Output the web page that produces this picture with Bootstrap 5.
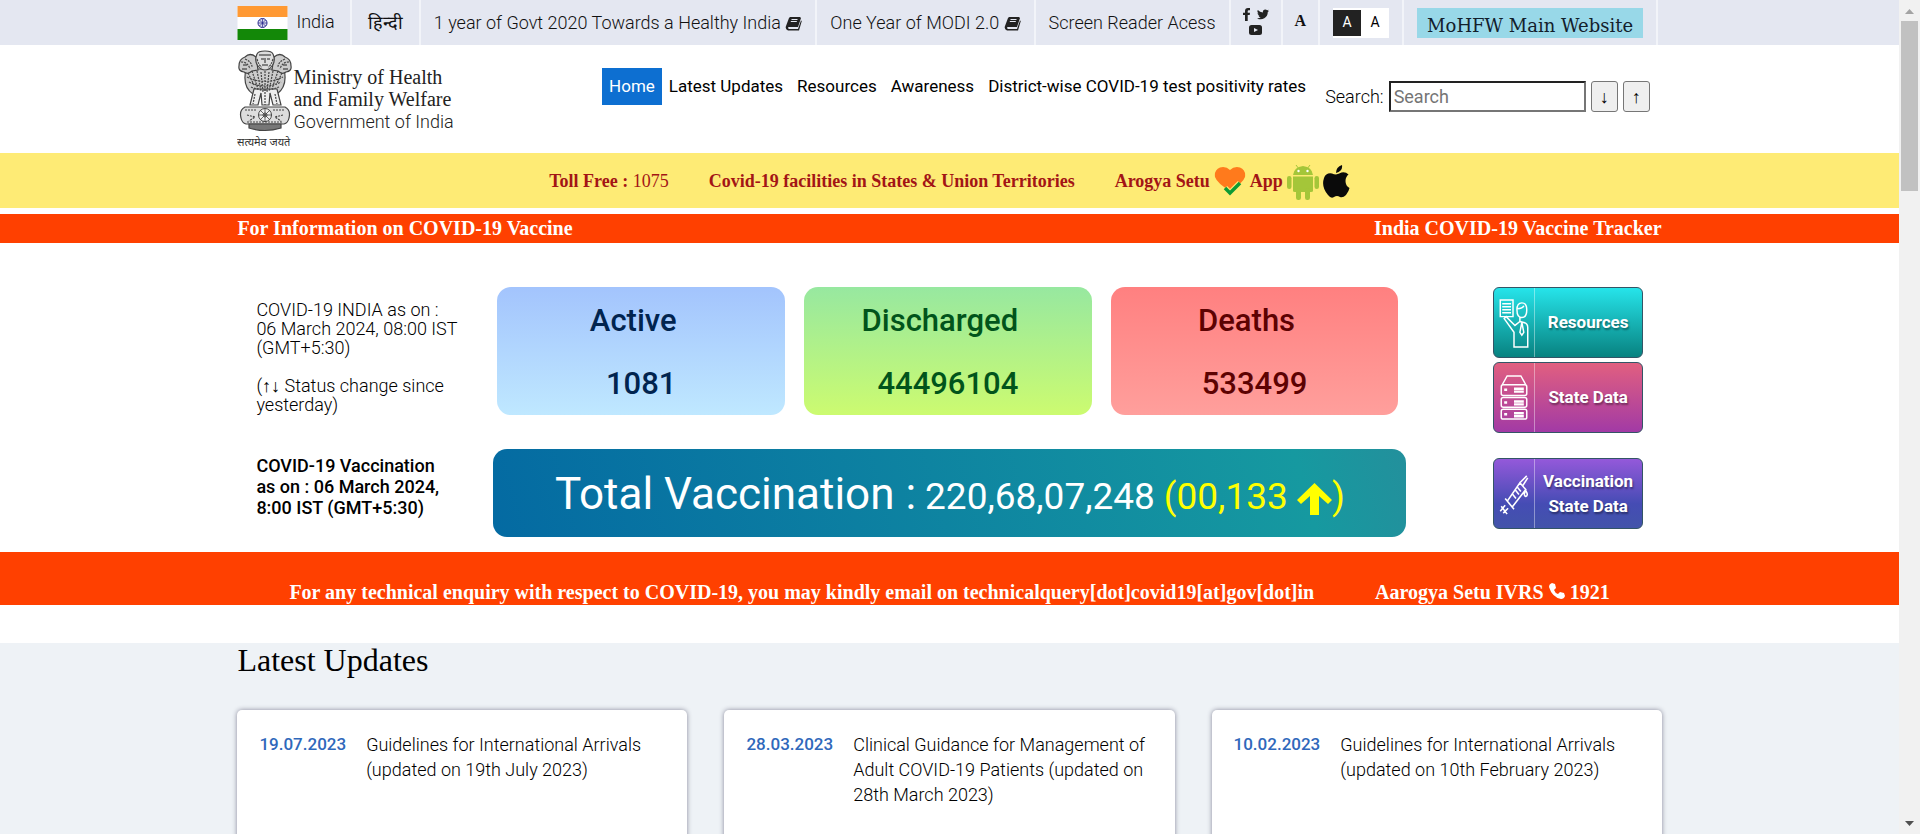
<!DOCTYPE html>
<html lang="en">
<head>
<meta charset="utf-8">
<meta name="viewport" content="width=device-width, initial-scale=1">
<title>Ministry of Health and Family Welfare | Government of India</title>
<link href="https://cdn.jsdelivr.net/npm/bootstrap@5.3.0/dist/css/bootstrap.min.css" rel="stylesheet">
<style>
  :root { --flame: #ff4000; }
  body { font-family: Roboto, "Liberation Sans", sans-serif; font-size: 18px; color: #000; background: #fff; overflow: hidden; }
  a { color: inherit; text-decoration: none; }
  .serif { font-family: "Liberation Serif", "Times New Roman", serif; }
  .wrap { width: 75%; margin-inline: auto; }

  .utility { background: #e4e7f1; color: #111; height: 45px; font-weight: 300; }
  .utility li { display: flex; align-items: center; height: 45px; padding: 0 13px; border-right: 2px solid #f2f4f9; white-space: nowrap; flex-shrink: 0; }
  .utility li:first-child { padding: 0 15px 3px 0; }
  .utility .social { width: 52px; line-height: 0; flex-wrap: wrap; align-content: center; column-gap: 6px; row-gap: 4px; padding: 0 10px 3px; }
  .utility .resize { padding: 0 12px 4px; }
  .contrast { background: #fff; height: 30px; width: 56px; font-size: 14px; }
  .contrast button { border: 0; background: none; width: 28px; height: 26px; padding: 0; }
  .contrast button.dark { background: #222; color: #fff; }
  .mainsite { background: #98d8e8; color: #13202c; font: 400 18px/36px "DejaVu Serif", serif; height: 30px; width: 226px; text-align: center; }

  .masthead { height: 108px; }
  .brand { font-size: 20px; line-height: 22px; color: #222; }
  .brand-name { padding-top: 21px; }
  .brand-name span { font-family: Roboto, sans-serif; font-size: 18px; font-weight: 300; line-height: 24px; }
  .menu { padding-top: 23px; }
  .menu a { display: block; padding: 0 7px; line-height: 37px; font-size: 17px; white-space: nowrap; }
  .menu a.current { background: #0d6fd1; color: #fff; }
  .finder { gap: 5px; padding: 36px 12px 0 12px; font-weight: 300; line-height: 31px; }
  .finder input { width: 197px; height: 31px; border: 2px solid; padding: 0 3px; border-color: #222 #767676 #767676 #222; line-height: 27px; }
  .finder input::placeholder { color: #757575; }
  .finder button { width: 27px; height: 31px; border: 1px solid #767676; border-radius: 3px; background: #efefef; padding: 0; line-height: 1; }

  .helpline { background: #feeb75; color: #a31515; height: 55px; padding-top: 2px; font-size: 18px; font-weight: 700; gap: 40px; }
  .flame { background: var(--flame); color: #fff; font-weight: 700; font-size: 20px; }
  .trackers { margin-top: 6px; line-height: 29px; }

  .stats { padding-top: 44px; height: 309px; display: grid; grid-template-columns: 256px 913px 1fr; }
  .asof { font-weight: 300; line-height: 19px; padding: 13px 24px 0 19px; }
  .vaxdate { line-height: 21px; font-weight: 500; padding: 41px 40px 0 19px; }
  .figures { display: grid; grid-template-columns: repeat(3, 1fr); gap: 19px; padding: 0 8px 0 4px; height: 127px; }
  .figure-box { border-radius: 14px; font-size: 31px; font-weight: 500; line-height: 63px; text-align: center; }
  .figure-box h2 { font: inherit; margin: 0; padding: 2px 16px 0 0; }
  .active-box { background: linear-gradient(#a3c4fd, #bfe8ff); color: #01244f; }
  .cured-box { background: linear-gradient(#97e8a0, #ccfb70); color: #01541b; }
  .death-box { background: linear-gradient(#ff8080, #ff9f9c); color: #5d0202; }
  .total { margin-top: 35px; height: 88px; padding-top: 12px; gap: 9px; border-radius: 14px; color: #fff; background: linear-gradient(75deg, #046aa2, #1699a0 88%, #23909c); font-size: 37px; }
  .total strong { font-size: 44px; font-weight: 400; }
  .total em { font-style: normal; color: #ff0; }
  .tiles { padding-right: 19px; }
  .tile { width: 150px; height: 71px; border-radius: 6px; border: 1px solid #356; color: #fff; text-align: center; font: 700 17px/25px Roboto, sans-serif; text-shadow: 1px 2px 2px #0006; padding: 0; }
  .tile svg { width: 41px; height: 100%; border-right: 1px solid #fff6; flex: none; padding: 8px 5px; }
  .tile-res { background: linear-gradient(#26e4ea, #088280); margin-bottom: 4px; }
  .tile-state { background: linear-gradient(#e15f80, #a23aa5); margin-bottom: 25px; }
  .tile-vax { background: linear-gradient(#9459da, #454cb4 65%, #4254aa); }

  .enquiry { height: 53px; padding: 28px 0 0 52px; line-height: 24px; }
  .enquiry a:first-child { margin-right: 57px; }
  .updates { background: #eef2f6; margin-top: 38px; }
  .updates h1 { font-size: 32px; line-height: 34px; margin: 0 0 33px; }
  .notes { display: grid; grid-template-columns: repeat(3, 1fr); gap: 37px; }
  .note { background: #fff; border-radius: 5px; box-shadow: 0 0 5px #889; padding: 22px; line-height: 25px; min-height: 180px; display: flex; gap: 20px; font-weight: 300; }
  .note time { color: #2f68bb; font-weight: 500; font-size: 17px; }

  .rail { width: 21px; background: #f1f1f1; padding: 0 2px; }
  .rail i { display: block; height: 170px; background: #c1c1c1; }
</style>
</head>
<body>
<div class="d-flex vh-100">
<div class="flex-fill overflow-hidden">
  <header>
    <div class="utility">
      <ul class="wrap list-unstyled d-flex mb-0">
        <li><a href="#" class="d-flex align-items-center">
          <svg class="mt-1 me-2" width="51" height="34" viewBox="0 0 50 34"><path fill="#fff" d="M0 0h50v34H0z"/><path fill="#ff9933" d="M0 0h50v11H0z"/><path fill="#138808" d="M0 23h50v11H0z"/><circle cx="25" cy="17" r="4.500" fill="#dde" stroke="#22228a"/><path stroke="#22228a" stroke-width=".7" d="M25 13v8M21 17h8M22 14l6 6M28 14l-6 6"/></svg><span>India</span></a></li>
        <li class="px-3"><a href="#" lang="hi">हिन्दी</a></li>
        <li><a href="#">1 year of Govt 2020 Towards a Healthy India <svg width="17" height="16" viewBox="0 0 17 16"><path fill="#222" d="M5 1h10l1 1-3 9H3.500q-1 1.500.5 2h9l3-8.500.8.500L14 14.500H3Q-.2 13 1 10L4 2z"/><path stroke="#e4e7f1" d="M6.500 3.500h6M5.800 5.500h6"/></svg></a></li>
        <li><a href="#">One Year of MODI 2.0 <svg width="17" height="16" viewBox="0 0 17 16"><path fill="#222" d="M5 1h10l1 1-3 9H3.500q-1 1.500.5 2h9l3-8.500.8.500L14 14.500H3Q-.2 13 1 10L4 2z"/><path stroke="#e4e7f1" d="M6.500 3.500h6M5.800 5.500h6"/></svg></a></li>
        <li><a href="#">Screen Reader Acess</a></li>
        <li class="social justify-content-center">
          <a href="#" aria-label="Facebook"><svg width="8" height="13" viewBox="0 0 8 13"><path fill="#222" d="M2 13V7H0V4.700h2V3Q2 0 5 0h2v2.200H5.700q-1 0-1 1v1.500H7L6.700 7h-2v6z"/></svg></a>
          <a href="#" aria-label="Twitter"><svg width="12" height="11" viewBox="0 0 24 20"><path fill="#222" d="M24 2.400a10 10 0 0 1-2.800.8A5 5 0 0 0 23.300.5a10 10 0 0 1-3.100 1.200A4.900 4.900 0 0 0 11.800 6 14 14 0 0 1 1.700.9a4.900 4.900 0 0 0 1.500 6.600A4.900 4.900 0 0 1 1 6.900a4.900 4.900 0 0 0 3.900 4.900 5 5 0 0 1-2.200.1 4.900 4.900 0 0 0 4.600 3.400A10 10 0 0 1 0 17.300 14 14 0 0 0 21.500 4.800 10 10 0 0 0 24 2.400z"/></svg></a>
          <a href="#" aria-label="YouTube"><svg width="13" height="10" viewBox="0 0 13 10"><rect width="13" height="10" rx="2.500" fill="#222"/><path fill="#e4e7f1" d="M5 3l4 2-4 2z"/></svg></a>
        </li>
        <li class="resize"><a href="#" class="serif fw-bold fs-6">A</a></li>
        <li><div class="contrast d-flex align-items-center"><button class="dark">A</button><button>A</button></div></li>
        <li><a href="#" class="mainsite">MoHFW Main Website</a></li>
      </ul>
    </div>
    <div class="wrap masthead d-flex">
      <a href="#" class="brand serif d-flex flex-shrink-0">
        <svg width="56" height="100" viewBox="0 0 56 100" class="mt-1" fill="none" stroke="#444">
          <g stroke-width="1.200" fill="#ccc">
            <path d="M9 20q-4 18 7 25h24q11-8 7-25z"/>
            <path d="M17 40l-4 16h8l3-12 1 12h7l1-12 3 12h8l-4-16z" fill="#eee"/>
            <path d="M19 8q-6-5-11 0-6 2-6 9-1 5 5 6 4 3 8-1l6-1zM37 8q6-5 11 0 6 2 6 9 1 5-5 6-4 3-8-1l-6-1z"/>
            <path d="M20 5q1-3 8-3t8 3q3 7-1 12-3 4-7 4t-7-4q-4-5-1-12z" fill="#ddd"/>
            <path d="M8 58h40q6 3 4 11-1 5-5 6H9q-4-1-5-6-2-8 4-11z" fill="#ddd"/>
            <path d="M12 75h32v4q-16 5-32 0z" fill="#777"/>
          </g>
          <g stroke-width="1.200" stroke-dasharray="2 1">
            <path d="M11 24l6 12M15 22l6 18M20 22l4 20M24 23l2 20M28 22v20M32 23l-2 20M36 22l-4 20M41 22l-6 18M45 24l-6 12M10 28q18 9 36 0M12 33q16 8 32 0M14 38q14 6 28 0"/>
            <path d="M4 13q7 0 9 7M52 13q-7 0-9 7M8 10q7 3 7 8M48 10q-7 3-7 8M20 10q2 7 5 8M36 10q-2 7-5 8M18 45l-2 10M28 43v13M38 45l2 10"/>
            <path d="M8 61h12M36 61h12M10 66l8 2-6 4M46 66l-8 2 6 4M10 73h36"/>
          </g>
          <path d="M22 6h12M24 10h3M30 10h3M28 9v5M25 16h6M6 16h4M46 16h4M5 20h5M46 20h5" stroke="#222"/>
          <circle cx="28" cy="66" r="6.500" fill="#eee"/><circle cx="28" cy="66" r="2"/><path stroke-width=".8" d="M28 60v13M22 66h13M23 61l10 10M33 61l-10 10"/>
          <text x="0" y="97" font-family="Noto Sans, sans-serif" font-size="11" fill="#333" stroke="none">सत्यमेव जयते</text>
        </svg>
        <span class="brand-name">Ministry of Health<br>and Family Welfare<br><span>Government of India</span></span>
      </a>
      <nav class="menu d-flex ms-auto">
        <a href="#" class="current align-self-start">Home</a><a href="#">Latest Updates</a><a href="#">Resources</a><a href="#">Awareness</a><a href="#">District-wise COVID-19 test positivity rates</a>
      </nav>
      <form class="finder d-flex align-items-start">
        <label for="q">Search:</label><input id="q" type="text" placeholder="Search"><button type="button">↓</button><button type="button">↑</button>
      </form>
    </div>
    <div class="helpline serif d-flex justify-content-center align-items-center">
      <a href="#">Toll Free : <span class="fw-normal">1075</span></a>
      <a href="#">Covid-19 facilities in States &amp; Union Territories</a>
      <span class="d-flex align-items-center gap-1"><a href="#">Arogya Setu</a>
        <svg width="32" height="30" viewBox="0 0 32 30"><path fill="#ff7a1c" d="M16 3Q20-1 26 0.500 32 3 31 10 29 16 16 24 3 16 1 10 0 3 6 .5 12-1 16 3z"/><path fill="none" stroke="#feeb75" stroke-width="6" d="M11 21l5 5 10-10"/><path fill="none" stroke="#0d9a35" stroke-width="3.500" d="M11 21l5 5 10-10"/></svg>
        <a href="#">App</a>
        <a href="#" aria-label="Android"><svg width="32" height="36" viewBox="0 0 32 36"><g fill="#a4c639"><path d="M6 11q1-8 10-9 9 1 10 9zM6 12.500h20V27q0 1-2 1H8q-2 0-2-1z"/><rect y="12" width="4.500" height="13" rx="2.200"/><rect x="27.500" y="12" width="4.500" height="13" rx="2.200"/><rect x="9" y="24" width="5" height="12" rx="2.200"/><rect x="18" y="24" width="5" height="12" rx="2.200"/><path stroke="#a4c639" d="M9 1l3 4M23 1l-3 4"/></g><g fill="#fff"><circle cx="11.500" cy="7" r="1.200"/><circle cx="20.500" cy="7" r="1.200"/></g></svg></a>
        <a href="#" aria-label="Apple"><svg width="27" height="33" viewBox="0 0 27 33"><path fill="#0a0a0a" d="M13 9.500q-2 0-4-1Q3 7.500 1 13q-3 9 4 17 3 4 6 2 3-2 6 0 3 1 6-2 3-4 3.500-7-4-2-4-7 0-4 3-6.500-3-3-7-2-3 1.500-5.500 2zM13 8q0-6 6-8 1 6-6 8z"/></svg></a>
      </span>
    </div>
    <div class="flame trackers serif"><div class="wrap d-flex justify-content-between"><a href="#">For Information on COVID-19 Vaccine</a><a href="#">India COVID-19 Vaccine Tracker</a></div></div>
  </header>
  <main>
    <section class="wrap stats">
      <div class="d-flex flex-column">
        <p class="asof mb-0">COVID-19 INDIA as on :<br>06 March 2024, 08:00 IST (GMT+5:30)<br><br>(↑↓ Status change since yesterday)</p>
        <p class="vaxdate">COVID-19 Vaccination as on : 06 March 2024, 8:00 IST (GMT+5:30)</p>
      </div>
      <div>
        <div class="figures">
          <div class="figure-box active-box"><h2>Active</h2>1081</div>
          <div class="figure-box cured-box"><h2>Discharged</h2>44496104</div>
          <div class="figure-box death-box"><h2>Deaths</h2>533499</div>
        </div>
        <div class="total d-flex justify-content-center align-items-baseline"><strong>Total Vaccination :</strong><span>220,68,07,248</span><em>(00,133 <svg width="35" height="32" viewBox="0 0 35 32"><path fill="#ff0" d="M17.500 0L35 17l-4 4-9-8v19h-9V13l-9 8-4-4z"/></svg>)</em></div>
      </div>
      <div class="tiles d-flex flex-column align-items-end">
        <button class="tile tile-res d-flex align-items-center"><svg viewBox="0 0 30 54" fill="none" stroke="#fff" stroke-width="1.500"><path d="M1 4h13v17H1zM3 8h9M3 11h9M3 14h9M3 17h9M18 14q0-7 5-7t5 7q0 8-5 8t-5-8zM18 13q6 0 7-3M21 22v4l-5 4-9-9-2 2 10 14v15h14V32q0-4-4-5l-4-1M23 27l-2 10 2 3 2-3z"/></svg><span class="flex-fill">Resources</span></button>
        <button class="tile tile-state d-flex align-items-center"><svg viewBox="0 0 30 54" fill="none" stroke="#fff" stroke-width="1.500"><path d="M3 14L8 5h14l5 9"/><rect x="2" y="14" width="26" height="11" rx="2"/><rect x="2" y="27" width="26" height="10" rx="2"/><rect x="2" y="39" width="26" height="10" rx="2"/><path stroke-width="2.500" d="M5 19h3M5 32h3M5 44h3M15 18h10M15 21h10M15 31h10M15 34h10M15 43h10M15 46h10"/></svg><span class="flex-fill">State Data</span></button>
        <button class="tile tile-vax d-flex align-items-center"><svg viewBox="0 0 30 54" fill="none" stroke="#fff" stroke-width="1.600"><path d="M2 40l6 8M1 45l5-6M4 47l5-5M6 32l9 11M8 35L21 16l6 7-14 18M21 16l7-7M24 19l5-8M13 27l4 5M16 23l4 5M18 20l4 5M27 24q-3 5 0 6 3-1 0-6z"/></svg><span class="flex-fill">Vaccination<br>State Data</span></button>
      </div>
    </section>
    <section class="flame serif"><div class="wrap enquiry"><a href="#">For any technical enquiry with respect to COVID-19, you may kindly email on technicalquery[dot]covid19[at]gov[dot]in</a> <a href="#">Aarogya Setu IVRS <svg class="align-baseline" width="16" height="16" viewBox="0 0 16 16"><path fill="#fff" d="M3 0l3 1 1 4-2 2q1 3 4 4l2-2 4 1 1 3q-1 3-4 3Q3 14 0 4 0 1 3 0z"/></svg> 1921</a></div></section>
    <section class="updates">
      <div class="wrap">
        <h1 class="serif fw-normal">Latest Updates</h1>
        <div class="notes">
          <article class="note"><time>19.07.2023</time><a href="#">Guidelines for International Arrivals (updated on 19th July 2023)</a></article>
          <article class="note"><time>28.03.2023</time><a href="#">Clinical Guidance for Management of Adult COVID-19 Patients (updated on 28th March 2023)</a></article>
          <article class="note"><time>10.02.2023</time><a href="#">Guidelines for International Arrivals (updated on 10th February 2023)</a></article>
        </div>
      </div>
    </section>
  </main>
</div>
<div class="rail d-flex flex-column justify-content-between align-items-center flex-shrink-0">
  <svg width="17" height="21" viewBox="0 0 17 21"><path fill="#a3a3a3" d="M4 14l4.500-5 4.500 5z"/></svg>
  <i class="w-100 mb-auto"></i>
  <svg width="17" height="21" viewBox="0 0 17 21"><path fill="#505050" d="M4 8l4.500 5L13 8z"/></svg>
</div>
</div>
<script src="https://cdn.jsdelivr.net/npm/bootstrap@5.3.0/dist/js/bootstrap.bundle.min.js"></script>
</body>
</html>
